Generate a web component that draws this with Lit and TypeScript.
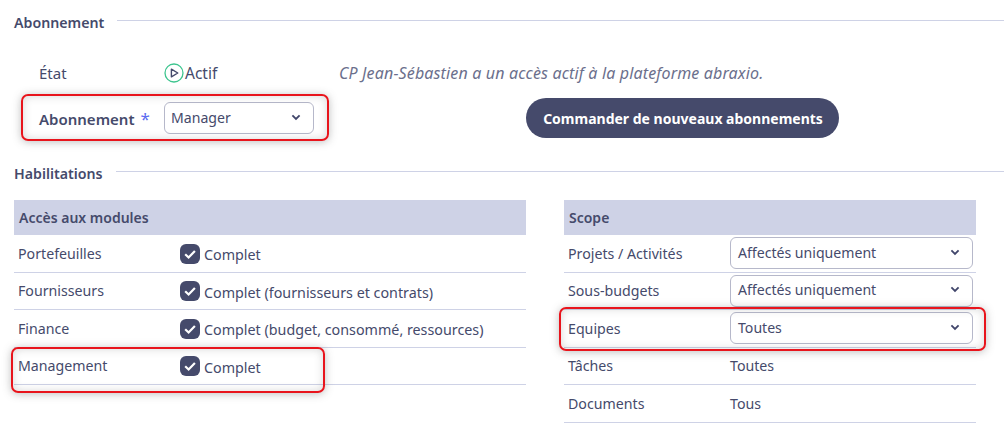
import { LitElement, html, css } from "lit";
import { customElement } from "lit/decorators.js";

const chevron = html`<svg class="chev" width="10" height="7" viewBox="0 0 10 7"><path d="M1.4 1.4 5 5 8.6 1.4" fill="none" stroke="#40456a" stroke-width="1.8"/></svg>`;
const check = html`<svg class="cb" width="20" height="20" viewBox="0 0 20 20"><rect width="20" height="20" rx="6" fill="#454a6b"/><path d="M5.2 10.2 8.6 13.5 14.9 7" fill="none" stroke="#fff" stroke-width="2.2"/></svg>`;
const play = html`<svg class="play" width="20" height="20" viewBox="0 0 20 20"><circle cx="10" cy="10" r="9" fill="none" stroke="#3ec58f" stroke-width="1.3"/><path d="M7.4 6.2 13.8 10 7.4 13.8Z" fill="none" stroke="#454a6b" stroke-width="1.4" stroke-linejoin="round"/></svg>`;

const select = (v: string) => html`<div class="select"><span>${v}</span>${chevron}</div>`;

@customElement("app-root")
export class AppRoot extends LitElement {
  static styles = css`
    :host { display: block; width: 1004px; height: 438px; position: relative; overflow: hidden; background: #fff;
      font-family: "Noto Sans", sans-serif; font-size: 14px; color: #454a6b; }
    * { box-sizing: border-box; }
    .section { display: flex; align-items: center; gap: 13px; padding-left: 14px; font-weight: 600; font-size: 14.2px; height: 20px; }
    .section::after { content: ""; flex: 1; height: 1px; background: #ced2e6; margin-top: -4px; }
    .s1 { margin-top: 12px; }
    .s2 { margin-top: 25px; }
    .sub { display: grid; grid-template-columns: 125px 175px 1fr; padding-left: 39px; margin-top: 29px; }
    .etat { height: 24px; align-items: center; }
    .actif { display: flex; align-items: center; gap: 1px; font-size: 15.5px; margin-top: -1px; }
    .etat > span:first-child { font-size: 15px; margin-top: -1px; }
    .msg { grid-column: 3; font-style: italic; color: #6b6f8c; font-size: 16px; letter-spacing: .15px; margin-top: -1px; }
    .abo { margin-top: 13px; height: 40px; align-items: center; grid-template-columns: 125px 362px 1fr; }
    .abo b { font-weight: 600; font-size: 15px; }
    .abo i { font-style: normal; color: #5b6cf0; font-weight: 400; font-size: 17px; margin-left: 2px; }
    .select { display: flex; align-items: center; justify-content: space-between; height: 32px; border: 1px solid #b6b8ca; border-radius: 6px; padding: 0 12px 2px 7px; background: #fff; font-size: 14.1px; }
    .abo .select { width: 150px; padding-left: 6px; }
    .btn { width: 313px; height: 40px; border-radius: 20px; background: #454a6b; color: #fff; font-weight: 700; display: flex; align-items: center; justify-content: center; padding-left: 1px; }
    .tables { display: grid; grid-template-columns: 512px 412px; gap: 38px; padding-left: 14px; margin-top: 17px; }
    .th { height: 35px; background: #ced2e6; display: flex; align-items: center; padding: 0 5px; font-weight: 600; }
    .row { display: grid; grid-template-columns: 162px 1fr; height: 37.5px; align-items: center; padding-left: 4px; border-bottom: 1px solid #ced2e6; font-size: 14.2px; }
    .scope .row { padding-right: 3px; }
    .val { display: flex; align-items: center; gap: 4px; font-size: 14.3px; }
    .val span { padding-top: 3px; }
    .cb { flex: none; margin-top: 1px; }
    .box { position: absolute; border: 2px solid #e8141c; border-radius: 7px; box-shadow: 0 1px 8px rgba(70,70,70,.35), inset 0 0 8px rgba(70,70,70,.22); pointer-events: none; }
    .b1 { left: 21px; top: 94px; width: 308px; height: 47px; }
    .b2 { left: 11px; top: 347px; width: 314px; height: 46px; }
    .b3 { left: 559px; top: 307px; width: 427px; height: 44px; }
  `;

  render() {
    const mods: [string, string][] = [
      ["Portefeuilles", "Complet"],
      ["Fournisseurs", "Complet (fournisseurs et contrats)"],
      ["Finance", "Complet (budget, consommé, ressources)"],
      ["Management", "Complet"],
    ];
    return html`
      <div class="section s1">Abonnement</div>
      <div class="sub etat">
        <span>État</span>
        <span class="actif">${play}Actif</span>
        <span class="msg">CP Jean-Sébastien a un accès actif à la plateforme abraxio.</span>
      </div>
      <div class="sub abo">
        <b>Abonnement <i>*</i></b>
        ${select("Manager")}
        <div class="btn">Commander de nouveaux abonnements</div>
      </div>
      <div class="section s2">Habilitations</div>
      <div class="tables">
        <div>
          <div class="th">Accès aux modules</div>
          ${mods.map(([a, b]) => html`<div class="row"><span>${a}</span><div class="val">${check}<span>${b}</span></div></div>`)}
        </div>
        <div class="scope">
          <div class="th">Scope</div>
          <div class="row"><span>Projets / Activités</span>${select("Affectés uniquement")}</div>
          <div class="row"><span>Sous-budgets</span>${select("Affectés uniquement")}</div>
          <div class="row"><span>Equipes</span>${select("Toutes")}</div>
          <div class="row"><span>Tâches</span><span>Toutes</span></div>
          <div class="row"><span>Documents</span><span>Tous</span></div>
        </div>
      </div>
      <div class="box b1"></div>
      <div class="box b2"></div>
      <div class="box b3"></div>
    `;
  }
}
